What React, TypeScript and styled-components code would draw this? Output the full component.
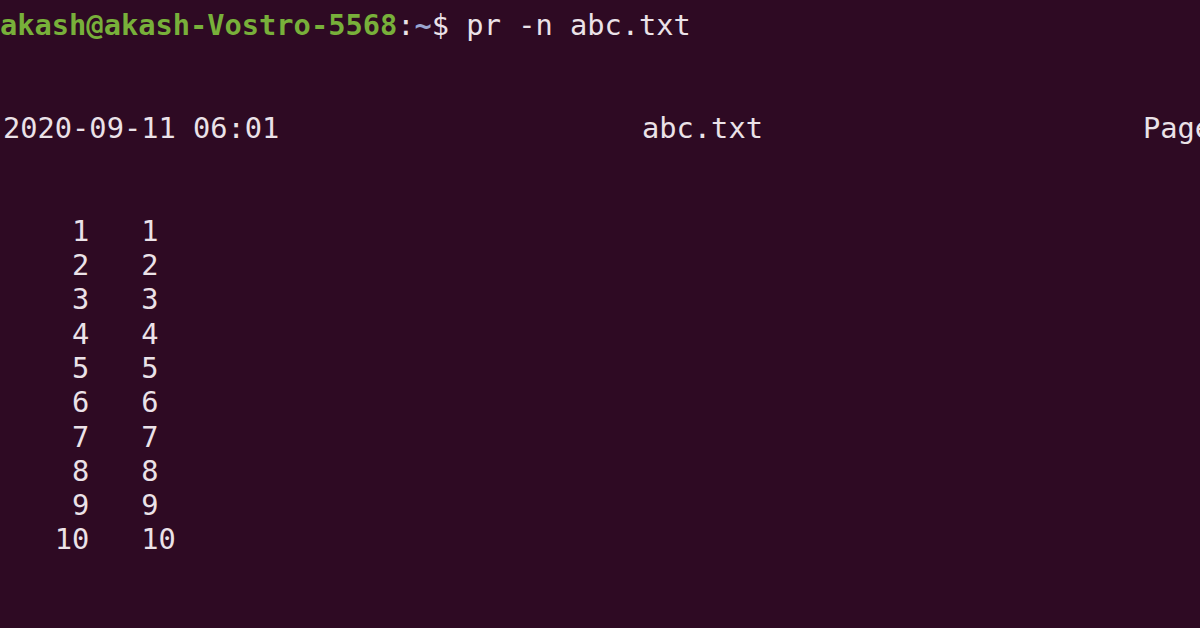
import React from "react";
import styled, { createGlobalStyle } from "styled-components";

const Global = createGlobalStyle`
  html, body {
    margin: 0;
    padding: 0;
    background: #2e0a23;
    overflow: hidden;
  }
`;

const Terminal = styled.div`
  width: 1200px;
  height: 628px;
  box-sizing: border-box;
  padding: 8px 0 0 3px;
  background: #2e0a23;
  color: #ebe2e8;
  font-family: "DejaVu Sans Mono", "Liberation Mono", monospace;
  font-size: 28.7px;
  line-height: 34.3px;
  overflow: hidden;
`;

const Line = styled.div<{ $shift?: number }>`
  white-space: pre;
  height: 34.3px;
  margin-left: ${(p) => p.$shift ?? 0}px;
`;

const UserHost = styled.span`
  color: #78b03a;
  font-weight: bold;
`;

const Path = styled.span`
  color: #9aa6cf;
  font-weight: bold;
`;

const Plain = styled.span`
  color: #ebe2e8;
`;

const rows = Array.from({ length: 10 }, (_, i) => i + 1);

export default function App() {
  return (
    <>
      <Global />
      <Terminal>
        <Line $shift={-3}>
          <UserHost>akash@akash-Vostro-5568</UserHost>
          <Plain>:</Plain>
          <Path>~</Path>
          <Plain>$ pr -n abc.txt</Plain>
        </Line>
        <Line> </Line>
        <Line> </Line>
        <Line>{"2020-09-11 06:01" + " ".repeat(21) + "abc.txt" + " ".repeat(22) + "Page 1"}</Line>
        <Line> </Line>
        <Line> </Line>
        {rows.map((n) => (
          <Line key={n}>{String(n).padStart(5, " ") + "   " + n}</Line>
        ))}
      </Terminal>
    </>
  );
}
